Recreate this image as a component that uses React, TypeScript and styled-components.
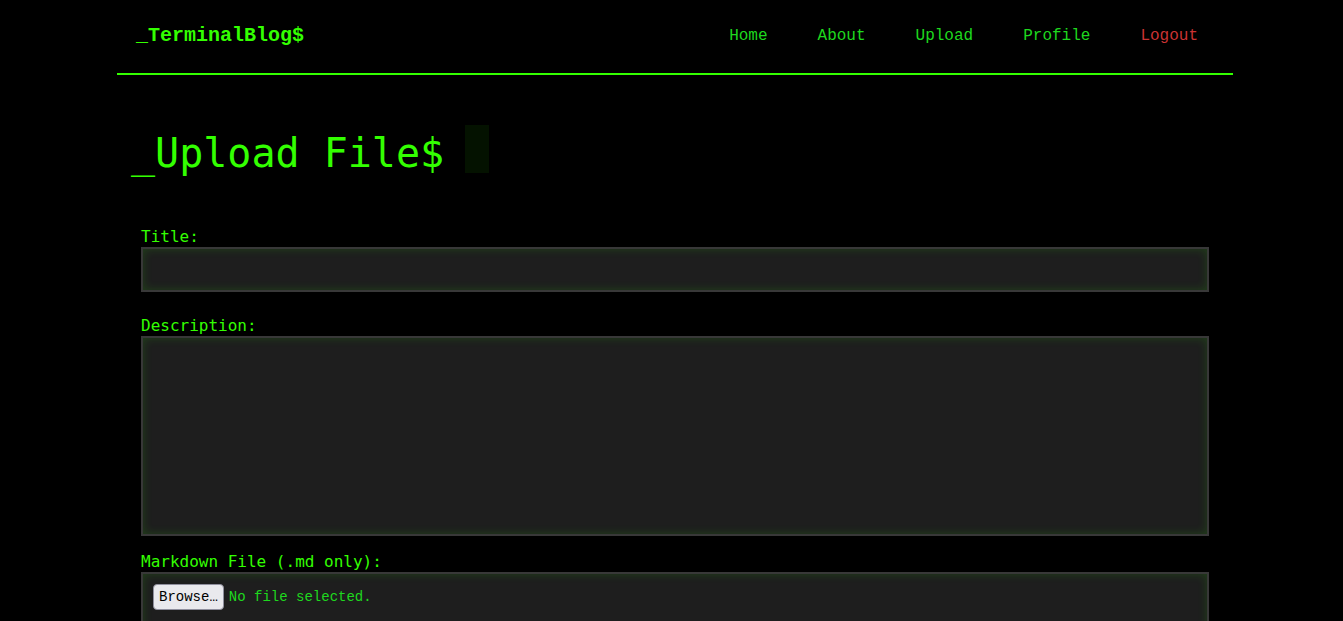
import React from "react";
import styled, { createGlobalStyle } from "styled-components";

const GlobalStyle = createGlobalStyle`
  html { overflow: hidden; background: #000; }
  body {
    margin: 0;
    padding: 0 0 0 7px;
    background: #000;
    color: #33ff00;
    font-family: "DejaVu Sans Mono", monospace;
  }
  * { box-sizing: border-box; }
`;

const Page = styled.div`
  width: 1116px;
  margin: 0 auto;
`;

const Header = styled.header`
  height: 75px;
  display: flex;
  align-items: center;
  justify-content: space-between;
  padding: 0 25px 2px 19px;
  border-bottom: 2px solid #33ff00;
`;

const Logo = styled.div`
  font-family: "Liberation Mono", "Courier New", monospace;
  font-weight: bold;
  font-size: 20px;
  color: #33ff00;
`;

const Nav = styled.nav`
  display: flex;
  gap: 30px;
`;

const NavLink = styled.a<{ $danger?: boolean }>`
  font-family: "Liberation Mono", "Courier New", monospace;
  font-size: 16px;
  padding: 0 10px;
  text-decoration: none;
  color: ${(p) => (p.$danger ? "#cc3333" : "#1ed81e")};
  cursor: pointer;
`;

const Main = styled.main`
  padding: 50px 12px 0;
`;

const Heading = styled.h1`
  margin: 0 0 50px 2px;
  font-size: 40px;
  line-height: 48px;
  font-weight: normal;
  color: #33ff00;
  display: flex;
  align-items: flex-start;
`;

const HeadingText = styled.span`
  padding-top: 4px;
`;

const Cursor = styled.span`
  display: inline-block;
  width: 24px;
  height: 48px;
  margin-left: 21px;
  background: rgba(51, 255, 0, 0.07);
`;

const Form = styled.form`
  padding: 0 12px;
  display: flex;
  flex-direction: column;
`;

const Group = styled.div<{ $gap: number }>`
  display: flex;
  flex-direction: column;
  margin-bottom: ${(p) => p.$gap}px;
`;

const Label = styled.label`
  font-size: 16px;
  line-height: 19px;
  margin-bottom: 1px;
  color: #33ff00;
`;

const fieldStyle = `
  width: 100%;
  background: #1e1e1e;
  border: 2px solid #383838;
  box-shadow: inset 0 0 10px rgba(51, 255, 0, 0.16);
  color: #33ff00;
  font-family: "DejaVu Sans Mono", monospace;
  font-size: 16px;
  outline: none;
  padding: 10px;
`;

const TextInput = styled.input`
  ${fieldStyle}
  height: 45px;
  display: block;
`;

const TextArea = styled.textarea`
  ${fieldStyle}
  height: 200px;
  display: block;
  resize: none;
`;

const FileBox = styled.div`
  ${fieldStyle}
  height: 60px;
  display: flex;
  align-items: flex-start;
  gap: 5px;
`;

const BrowseButton = styled.button`
  font-family: "Liberation Mono", "Courier New", monospace;
  font-size: 14px;
  line-height: 16px;
  height: 26px;
  padding: 4px 5px;
  color: #000;
  background: #e9e9ed;
  border: 1px solid #8f8f9d;
  border-radius: 4px;
`;

const FileText = styled.span`
  font-family: "Liberation Mono", "Courier New", monospace;
  font-size: 14px;
  line-height: 26px;
  color: #1ed81e;
`;

export default function App() {
  return (
    <>
      <GlobalStyle />
      <Page>
        <Header>
          <Logo>_TerminalBlog$</Logo>
          <Nav>
            <NavLink>Home</NavLink>
            <NavLink>About</NavLink>
            <NavLink>Upload</NavLink>
            <NavLink>Profile</NavLink>
            <NavLink $danger>Logout</NavLink>
          </Nav>
        </Header>
        <Main>
          <Heading>
            <HeadingText>_Upload File$</HeadingText>
            <Cursor />
          </Heading>
          <Form onSubmit={(e) => e.preventDefault()}>
            <Group $gap={24}>
              <Label>Title:</Label>
              <TextInput type="text" />
            </Group>
            <Group $gap={16}>
              <Label>Description:</Label>
              <TextArea />
            </Group>
            <Group $gap={20}>
              <Label>Markdown File (.md only):</Label>
              <FileBox>
                <BrowseButton type="button">Browse…</BrowseButton>
                <FileText>No file selected.</FileText>
              </FileBox>
            </Group>
          </Form>
        </Main>
      </Page>
    </>
  );
}
